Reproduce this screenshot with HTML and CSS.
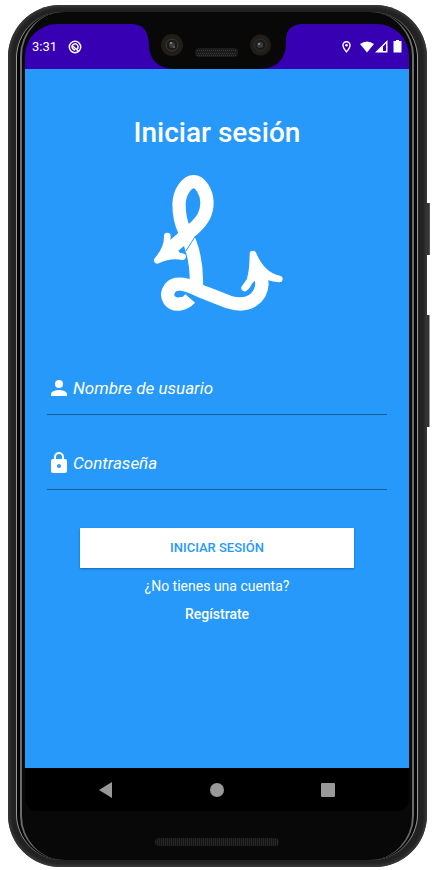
FILE: index.html
```html
<!DOCTYPE html>
<html lang="es">
<head>
<meta charset="utf-8">
<meta name="viewport" content="width=device-width, initial-scale=1">
<title>Iniciar sesión</title>
<link rel="stylesheet" href="styles.css">
</head>
<body>
<div class="phone">
  <span class="side-key power"></span>
  <span class="side-key volume"></span>
  <div class="rim">
    <div class="glass">
      <div class="screen">
        <header class="status">
          <span class="clock">3:31</span>
          <svg class="app-icon" viewBox="0 0 14 14" aria-hidden="true">
            <circle cx="7" cy="7" r="5.7" fill="none" stroke="#fff" stroke-width="1.5"/>
            <path d="M4.3 8.2a3 3 0 1 1 4.8.9M5 6.2l5.8 5.2M4.4 8.2c.7 1.3 1.7 1.8 2.8 1.8" fill="none" stroke="#fff" stroke-width="1.4"/>
          </svg>
          <svg class="notch" viewBox="0 0 174 45" aria-hidden="true">
            <path d="M0 0H174C160 0 156 7 156 18C156 34 148 45 128 45H46C26 45 19 34 19 20C18 7 14 0 0 0Z" fill="#080808"/>
            <g>
              <circle cx="42" cy="21" r="11" fill="#211d19"/><circle cx="42" cy="21" r="6" fill="#1c1b1a" stroke="#403c38"/><circle cx="42" cy="21" r="3" fill="#3c3c3c"/><circle cx="41" cy="19" r="1" fill="#999"/><circle cx="44" cy="23" r="1" fill="#666"/>
              <circle cx="130.500" cy="21" r="10.500" fill="#211d19"/><circle cx="130.500" cy="21" r="6" fill="#1c1b1a" stroke="#35312d"/><circle cx="130" cy="21" r="3" fill="#3c3c3c"/><circle cx="129" cy="20" r="1" fill="#999"/>
            </g>
            <rect x="65" y="24" width="43" height="9" rx="4" fill="#1b1b1b"/>
            <path d="M67 26.500H106M68 29.500H106M67 31.500H106" stroke="#383838" stroke-dasharray="1 1"/>
          </svg>
          <svg class="system-icons" viewBox="0 0 62 14" aria-hidden="true">
            <path d="M6.500 1.800a3.500 3.500 0 0 0-3.500 3.500c0 2.600 3.500 6.600 3.500 6.600s3.500-4 3.500-6.600a3.500 3.500 0 0 0-3.500-3.500Z" fill="none" stroke="#fff" stroke-width="1.400"/>
            <circle cx="6.500" cy="5.300" r="1.300" fill="#fff"/>
            <path d="M20 4Q27-1 34 4L27 12.500Z" fill="#fff"/>
            <path d="M35 12.500L47.500 0V12.500Z" fill="#fff"/><path d="M43 6.500L46 3.500V11H43Z" fill="#3700b3"/>
            <path d="M56 0h3v1h2.500v11.500h-8V1H56Z" fill="#fff"/>
          </svg>
        </header>
        <main class="login">
          <h1>Iniciar sesión</h1>
          <svg class="logo" viewBox="2 0 450 465" role="img" aria-label="Logotipo">
            <g fill="none" stroke="#fff" stroke-linejoin="round">
              <path d="M85 253L158 190C186 164 197 143 197 112C196 79 176 50 157 50C138 50 114 79 113 117C113 155 120 178 130 198C150 235 168 290 165 366" stroke-width="40"/>
              <path d="M147 399C128 420 98 424 84 405C73 389 82 363 105 358C137 353 161 373 195 385L262 411C322 430 359 399 362 357L357 320" stroke-width="40"/>
              <g stroke-width="20" stroke-linecap="round">
                <path d="M78 213Q79 251 48 286Q87 267 124 275" fill="#fff"/>
                <path d="M310 369Q334 353 335 267Q361 331 414 342Q379 340 360 324Q335 330 310 369" fill="#fff"/>
              </g>
            </g>
            <path d="M100 388Q101 376 118 377L134 385L125 395Q101 400 100 388Z" fill="#2699fb"/>
            <path d="M128 383L163 413" stroke="#2699fb" stroke-width="3"/>
            <path d="M163 212L134 258" stroke="#2699fb" stroke-width="3"/>
          </svg>
          <form>
            <div class="field">
              <label for="user"><svg viewBox="0 0 24 24" role="img" aria-label="Usuario"><circle cx="12" cy="8" r="4"/><path d="M12 14c-2.670 0-8 1.340-8 4v2h16v-2c0-2.660-5.330-4-8-4Z"/></svg></label>
              <input id="user" type="text" placeholder="Nombre de usuario">
            </div>
            <div class="field">
              <label for="password"><svg viewBox="0 0 24 24" role="img" aria-label="Contraseña"><path fill-rule="evenodd" d="M18 8h-1V6A5 5 0 0 0 7 6v2H6a2 2 0 0 0-2 2v10a2 2 0 0 0 2 2h12a2 2 0 0 0 2-2V10a2 2 0 0 0-2-2ZM9 8V6a3 3 0 0 1 6 0v2ZM12 13a2 2 0 1 0 0 4 2 2 0 0 0 0-4Z"/></svg></label>
              <input id="password" type="password" placeholder="Contraseña">
            </div>
            <button class="submit" type="button">INICIAR SESIÓN</button>
          </form>
          <p>¿No tienes una cuenta?</p>
          <a class="register" href="#">Regístrate</a>
        </main>
        <nav class="navigation" aria-label="Sistema">
          <button type="button" aria-label="Atrás"><svg viewBox="0 0 16 16"><path d="M1 8L14 0V16Z"/></svg></button>
          <button type="button" aria-label="Inicio"><svg viewBox="0 0 16 16"><circle cx="8" cy="8" r="7"/></svg></button>
          <button type="button" aria-label="Recientes"><svg viewBox="0 0 16 16"><rect x="1" y="1" width="14" height="14" rx="1"/></svg></button>
        </nav>
      </div>
      <div class="chin"><span class="speaker"></span></div>
    </div>
  </div>
</div>
</body>
</html>
```
FILE: styles.css
```css
* { box-sizing: border-box; }

body {
  margin: 0;
  min-height: 100vh;
  padding: 5px 6px 3px 8px;
  display: flex;
  background: #fff;
  color: #fff;
  font-family: Roboto, sans-serif;
}

.phone {
  position: relative;
  flex: 1;
  display: flex;
  padding: 7px 9px 7px 8px;
  border-radius: 52px;
  background: #222;
  box-shadow: inset 0 0 3px 2px #3a3a3a;
}

.side-key {
  position: absolute;
  left: 100%;
  width: 3px;
  background: #333;
  border-right: 1px solid #555;
}

.power { top: 23%; height: 6%; }
.volume { top: 36%; height: 13%; border-color: #999; }

.rim {
  flex: 1;
  display: flex;
  padding: 0 3px;
  border: 1px solid #999;
  border-width: 0 1px;
  border-radius: 46px;
  background: #050505;
}

.glass {
  flex: 1;
  display: flex;
  flex-direction: column;
  padding: 12px 3px 0;
  border: 2px solid #6b6b6b;
  border-width: 0 2px;
  border-radius: 44px;
  background: #080808;
}

.screen {
  flex: 1;
  display: flex;
  flex-direction: column;
  border-radius: 32px 32px 12px 12px;
  overflow: hidden;
  background: #000;
}

.status {
  position: relative;
  height: 45px;
  padding: 0 7px;
  display: flex;
  align-items: center;
  background: #3700b3;
}

.clock { font-size: 13px; }
.app-icon { width: 14px; height: 14px; margin-left: 11px; }
.notch { position: absolute; top: 0; left: 50%; width: 174px; height: 45px; transform: translateX(-50%); }
.system-icons { width: 62px; height: 14px; margin-left: auto; }

.login {
  flex: 1;
  display: flex;
  flex-direction: column;
  align-items: center;
  padding: 44px 22px 0;
  background: #2699fb;
  font-size: 14px;
  line-height: 20px;
}

h1 {
  margin: 0 0 12px;
  font-size: 28px;
  font-weight: 500;
  line-height: 40px;
}

.logo { width: 150px; height: 155px; }

form {
  align-self: stretch;
  display: flex;
  flex-direction: column;
  gap: 38px;
  margin-top: 58px;
}

.field {
  display: flex;
  align-items: center;
  padding-bottom: 16px;
  border-bottom: 1px solid #175c97;
}

.field label { display: flex; height: 20px; align-items: center; }
.field svg { width: 24px; height: 24px; fill: #fff; }

.field input {
  flex: 1;
  min-width: 0;
  height: 20px;
  margin-left: 2px;
  padding: 0;
  border: 0;
  outline: 0;
  background: transparent;
  color: #fff;
  font: italic 17px/20px Roboto, sans-serif;
}

.field input::placeholder { color: #fff; opacity: 1; }

.submit {
  height: 40px;
  margin: 0 33px;
  padding: 0;
  border: 0;
  background: #fff;
  color: #2699fb;
  font: 500 13px/20px Roboto, sans-serif;
  box-shadow: 0 1px 2px #1769ac;
}

p { margin: 8px 0; }
.register { color: #fff; font-weight: 500; text-decoration: none; }

.navigation {
  height: 43px;
  padding: 0 25px;
  display: flex;
  align-items: center;
}

.navigation button {
  flex: 1;
  display: flex;
  justify-content: center;
  padding: 0;
  border: 0;
  background: transparent;
}

.navigation svg { width: 16px; height: 16px; fill: #999; }

.chin {
  height: 49px;
  display: flex;
  justify-content: center;
  padding-top: 27px;
}

.speaker {
  width: 124px;
  height: 8px;
  border-radius: 4px;
  background: repeating-linear-gradient(90deg, #252525 0 1px, #151515 1px 2px);
}
```
